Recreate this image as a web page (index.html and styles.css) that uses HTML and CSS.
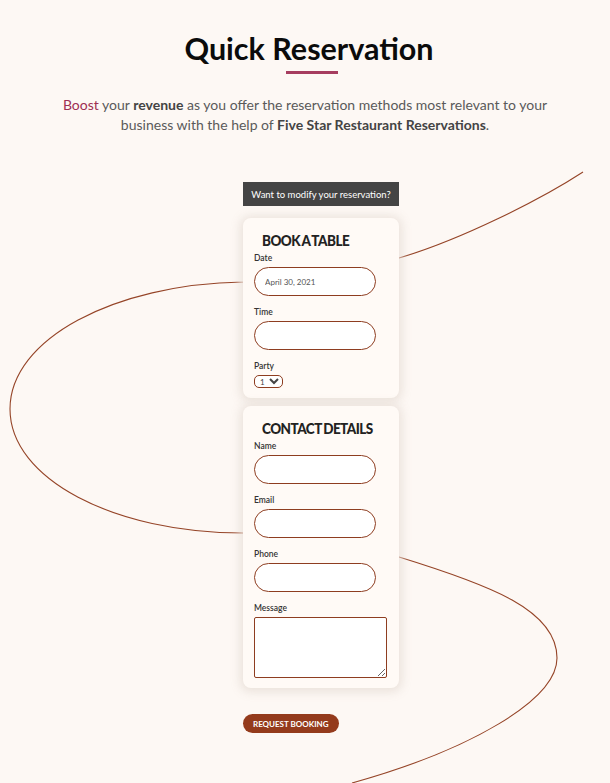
FILE: index.html
```html
<!DOCTYPE html>
<html lang="en">
<head>
<meta charset="utf-8">
<title>Quick Reservation</title>
<link rel="stylesheet" href="styles.css">
</head>
<body>
<div class="page">
  <svg class="curve" width="610" height="783" viewBox="0 0 610 783" aria-hidden="true">
    <path d="M583,172 C540,200 460,240 399,258 C340,272 280,280 243,282 C114,284 10,339 10,409 C10,479 114,533 243,533 C300,535 350,545 399,557 C490,585 557,610 557,658 C557,700 470,750 352,783" />
  </svg>

  <header class="intro">
    <h1 class="title">Quick Reservation</h1>
    <span class="rule"></span>
    <p class="lead"><span class="accent">Boost</span> your <strong>revenue</strong> as you offer the reservation methods most relevant to your business with the help of <strong>Five Star Restaurant Reservations</strong>.</p>
  </header>

  <div class="booking">
    <button class="modify" type="button">Want to modify your reservation?</button>
    <form class="form">
      <section class="card">
        <h2 class="card-title">BOOK A TABLE</h2>
        <label class="field-label" for="date">Date</label>
        <input class="field" id="date" type="text" value="April 30, 2021">
        <label class="field-label" for="time">Time</label>
        <input class="field" id="time" type="text">
        <label class="field-label" for="party">Party</label>
        <select class="party" id="party"><option>1</option><option>2</option></select>
      </section>
      <section class="card">
        <h2 class="card-title">CONTACT DETAILS</h2>
        <label class="field-label" for="name">Name</label>
        <input class="field" id="name" type="text">
        <label class="field-label" for="email">Email</label>
        <input class="field" id="email" type="text">
        <label class="field-label" for="phone">Phone</label>
        <input class="field" id="phone" type="text">
        <label class="field-label" for="message">Message</label>
        <textarea class="message" id="message"></textarea>
      </section>
      <button class="submit" type="button">REQUEST BOOKING</button>
    </form>
  </div>
</div>
</body>
</html>
```

FILE: styles.css
```css
html, body {
  margin: 0;
  padding: 0;
  background: #fdf8f4;
}

.page {
  position: relative;
  width: 610px;
  height: 783px;
  overflow: hidden;
  font-family: Lato, "Liberation Sans", sans-serif;
}

.curve {
  position: absolute;
  left: 0;
  top: 0;
}

.curve path {
  fill: none;
  stroke: #954427;
  stroke-width: 1.1;
}

.intro {
  position: relative;
  display: flex;
  flex-direction: column;
  align-items: center;
  padding-top: 30px;
}

.title {
  margin: 0 0 0 8px;
  font-size: 30.5px;
  line-height: 36px;
  font-weight: 700;
  color: #0b0b0b;
}

.rule {
  display: block;
  width: 52px;
  height: 3px;
  margin: 5px 0 0 14px;
  background: #a63d5f;
}

.lead {
  width: 500px;
  margin: 21px 0 0;
  font-size: 14px;
  line-height: 20px;
  color: #5a5a5a;
  text-align: center;
}

.lead strong {
  font-weight: 700;
  color: #444;
}

.accent {
  color: #9e2f52;
}

.booking {
  width: 156px;
  margin: 47px 0 0 243px;
  display: flex;
  flex-direction: column;
}

.modify {
  height: 24px;
  padding: 0;
  border: 0;
  background: #444;
  color: #fff;
  font-family: Lato, "Liberation Sans", sans-serif;
  font-size: 9.5px;
  cursor: pointer;
}

.form {
  display: flex;
  flex-direction: column;
  align-items: flex-start;
  margin-top: 12px;
}

.card {
  position: relative;
  box-sizing: border-box;
  width: 156px;
  display: flex;
  flex-direction: column;
  align-items: flex-start;
  padding: 13px 11px 10px;
  margin-bottom: 8px;
  background: #fffaf6;
  border-radius: 8px;
  box-shadow: 0 1px 10px 3px rgba(232, 222, 215, 0.85);
}

.card-title {
  margin: 0 0 3px 8px;
  font-family: Lato, "Liberation Sans", sans-serif;
  font-size: 15.5px;
  line-height: 18px;
  font-weight: 900;
  color: #222;
  letter-spacing: -0.6px;
  word-spacing: -1px;
  white-space: nowrap;
  transform: scaleX(0.87);
  transform-origin: left center;
}

.field-label {
  font-size: 8.5px;
  line-height: 12px;
  font-weight: 600;
  color: #333;
  margin-bottom: 3px;
}

.field {
  box-sizing: border-box;
  width: 122px;
  height: 29px;
  margin: 0 0 10px;
  padding: 0 10px;
  border: 1px solid #8e3d20;
  border-radius: 15px;
  background: #fff;
  font-family: Lato, "Liberation Sans", sans-serif;
  font-size: 8px;
  color: #555;
  outline: none;
}

.party {
  box-sizing: border-box;
  width: 29px;
  height: 13px;
  padding: 0 1px;
  border: 1px solid #8e3d20;
  border-radius: 5px;
  background: #fff;
  font-family: Lato, "Liberation Sans", sans-serif;
  font-size: 8px;
  color: #444;
}

.message {
  box-sizing: border-box;
  width: 133px;
  height: 61px;
  margin: 0;
  border: 1px solid #8e3d20;
  border-radius: 2px;
  background: #fff;
}

.submit {
  margin-top: 18px;
  height: 19px;
  padding: 0 10px;
  border: 0;
  border-radius: 10px;
  background: #943b1c;
  color: #fff;
  font-family: Lato, "Liberation Sans", sans-serif;
  font-size: 8px;
  font-weight: 700;
  cursor: pointer;
}
```
